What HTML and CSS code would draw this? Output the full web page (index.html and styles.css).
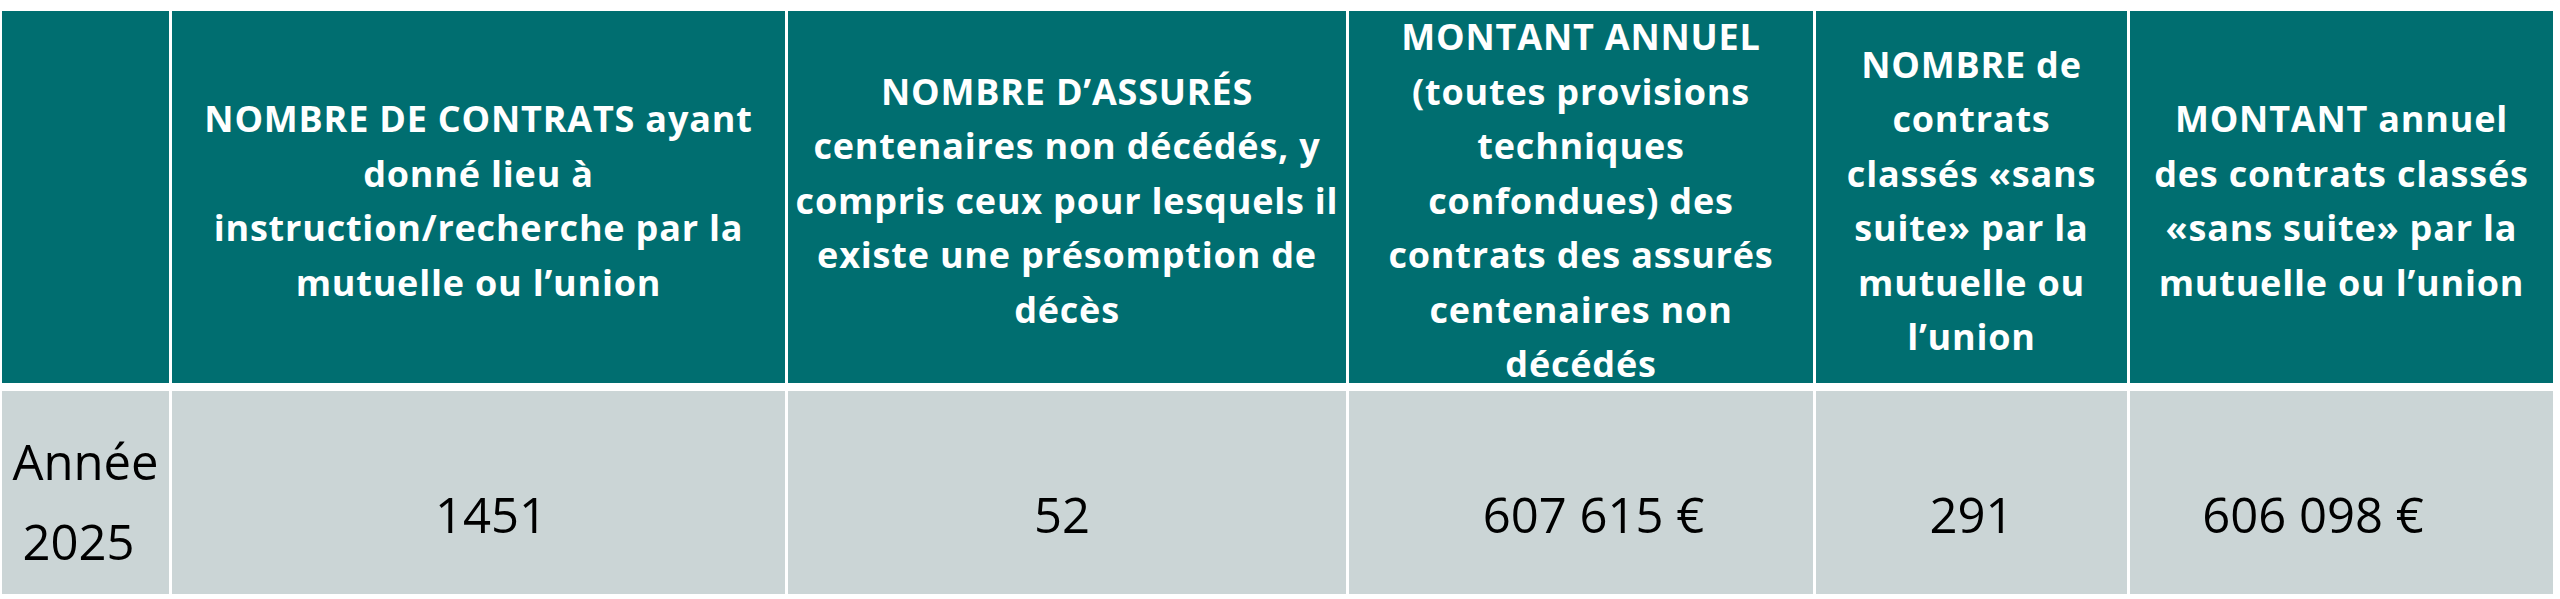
FILE: index.html
```html
<!DOCTYPE html>
<html lang="fr">
<head>
<meta charset="utf-8">
<title>Contrats centenaires</title>
<link rel="stylesheet" href="styles.css">
</head>
<body>
<div class="table" role="table">
  <div class="cell head" role="columnheader"></div>
  <div class="cell head" role="columnheader"><p>NOMBRE DE CONTRATS ayant<br>donné lieu à<br>instruction/recherche par la<br>mutuelle ou l’union</p></div>
  <div class="cell head" role="columnheader"><p>NOMBRE D’ASSURÉS<br>centenaires non décédés, y<br>compris ceux pour lesquels il<br>existe une présomption de<br>décès</p></div>
  <div class="cell head" role="columnheader"><p>MONTANT ANNUEL<br>(toutes provisions<br>techniques<br>confondues) des<br>contrats des assurés<br>centenaires non<br>décédés</p></div>
  <div class="cell head" role="columnheader"><p>NOMBRE de<br>contrats<br>classés «sans<br>suite» par la<br>mutuelle ou<br>l’union</p></div>
  <div class="cell head" role="columnheader"><p>MONTANT annuel<br>des contrats classés<br>«sans suite» par la<br>mutuelle ou l’union</p></div>

  <div class="cell data year" role="rowheader"><p>Année<br><span class="yr">2025</span></p></div>
  <div class="cell data value shift-r" role="cell"><p>1451</p></div>
  <div class="cell data value shift-l" role="cell"><p>52</p></div>
  <div class="cell data value shift-r" role="cell"><p>607 615 €</p></div>
  <div class="cell data value" role="cell"><p>291</p></div>
  <div class="cell data value shift-l2" role="cell"><p>606 098 €</p></div>
</div>
</body>
</html>
```

FILE: styles.css
```css
html, body {
  margin: 0;
  background: #ffffff;
}

body {
  padding: 11px 0 0 2px;
}

.table {
  display: grid;
  grid-template-columns: 167px 613px 558px 464px 311px 423px;
  grid-template-rows: 372px 203px;
  column-gap: 3px;
  row-gap: 8px;
}

.cell {
  display: flex;
  align-items: center;
  justify-content: center;
  text-align: center;
  box-sizing: border-box;
}

.cell p {
  margin: 0;
}

.head {
  background: #006e70;
  color: #ffffff;
  font-family: "Open Sans", "Liberation Sans", sans-serif;
  font-weight: 700;
  font-size: 36px;
  letter-spacing: 0.8px;
  line-height: 54.5px;
  padding-top: 8px;
  white-space: nowrap;
}

.data {
  background: #cbd5d6;
  color: #000000;
  font-family: "Open Sans", "Liberation Sans", sans-serif;
  font-weight: 400;
  font-size: 49px;
  line-height: 80px;
}

.year {
  padding-top: 17px;
}

.year .yr {
  padding-right: 14px;
}

.value {
  padding-top: 42px;
}

.shift-r {
  padding-left: 25px;
}

.shift-l {
  padding-right: 10px;
}

.shift-l2 {
  padding-right: 57px;
}
```
